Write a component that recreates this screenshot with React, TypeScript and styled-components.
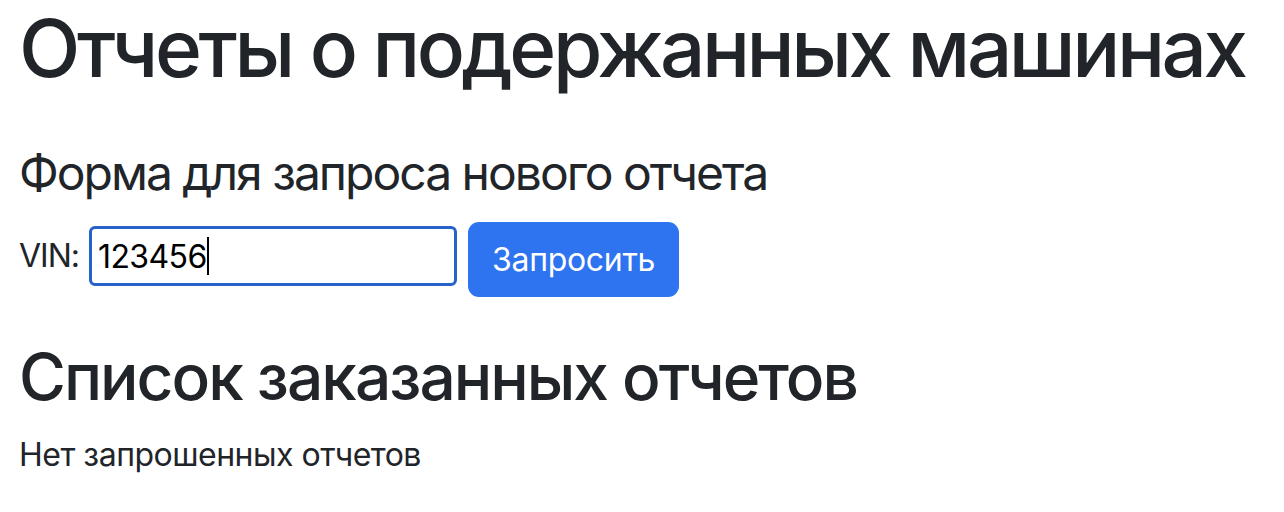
import React, { useEffect, useRef, useState } from "react";
import styled, { createGlobalStyle } from "styled-components";

const Global = createGlobalStyle`
  html, body { margin: 0; padding: 0; background: #fff; }
  body {
    font-family: Inter, "Noto Sans", sans-serif;
    color: #212529;
    font-size: 32px;
    line-height: 1.5;
  }
`;

const Page = styled.main`
  padding: 0 0 0 19px;
`;

const Title = styled.h1`
  margin: 0;
  font-size: 80px;
  line-height: 96px;
  font-weight: 500;
  letter-spacing: -3.45px;
  white-space: nowrap;
`;

const FormTitle = styled.h4`
  margin: 47.5px 0 0;
  font-size: 48px;
  line-height: 58px;
  font-weight: 400;
  letter-spacing: -2px;
`;

const FormRow = styled.form`
  display: flex;
  align-items: center;
  margin-top: 20.5px;
`;

const Label = styled.label`
  font-size: 32px;
  line-height: 48px;
  margin: 0 10px 8px 0;
  letter-spacing: -1px;
`;

const InputWrap = styled.div`
  position: relative;
  display: flex;
  margin-bottom: 7px;
`;

const Input = styled.input`
  box-sizing: border-box;
  width: 368px;
  height: 60px;
  border: 3px solid #2562c9;
  border-radius: 6px;
  padding: 0 6px;
  font-family: Inter, "Noto Sans", sans-serif;
  font-size: 32px;
  letter-spacing: -0.6px;
  color: #000;
  caret-color: transparent;
  outline: none;
`;

const CaretMirror = styled.span`
  position: absolute;
  left: 9px;
  top: 11px;
  display: flex;
  align-items: center;
  height: 38px;
  font-family: Inter, "Noto Sans", sans-serif;
  font-size: 32px;
  letter-spacing: -0.6px;
  color: transparent;
  white-space: pre;
  pointer-events: none;

  &::after {
    content: "";
    display: block;
    width: 2px;
    height: 38px;
    margin-left: 0.5px;
    background: #000;
  }
`;

const Button = styled.button`
  box-sizing: border-box;
  margin-left: 11px;
  height: 75px;
  padding: 0 24px;
  border: none;
  border-radius: 11px;
  background: #2e73ef;
  color: #fff;
  font-family: Inter, "Noto Sans", sans-serif;
  font-size: 32px;
  line-height: 48px;
  letter-spacing: -0.3px;
`;

const ListTitle = styled.h2`
  margin: 41px 0 0;
  font-size: 64px;
  line-height: 77px;
  font-weight: 500;
  letter-spacing: -2px;
`;

const Empty = styled.p`
  margin: 16px 0 0;
  font-size: 32px;
  line-height: 48px;
  letter-spacing: -0.5px;
`;

export default function App() {
  const [vin, setVin] = useState("123456");
  const ref = useRef<HTMLInputElement>(null);
  useEffect(() => {
    const el = ref.current;
    if (el) {
      el.focus();
      el.setSelectionRange(el.value.length, el.value.length);
    }
  }, []);
  return (
    <>
      <Global />
      <Page>
        <Title>Отчеты о подержанных машинах</Title>
        <FormTitle>Форма для запроса нового отчета</FormTitle>
        <FormRow onSubmit={(e) => e.preventDefault()}>
          <Label htmlFor="vin">VIN:</Label>
          <InputWrap>
            <Input
              id="vin"
              ref={ref}
              value={vin}
              onChange={(e) => setVin(e.target.value)}
            />
            <CaretMirror aria-hidden="true">{vin}</CaretMirror>
          </InputWrap>
          <Button type="submit">Запросить</Button>
        </FormRow>
        <ListTitle>Список заказанных отчетов</ListTitle>
        <Empty>Нет запрошенных отчетов</Empty>
      </Page>
    </>
  );
}
